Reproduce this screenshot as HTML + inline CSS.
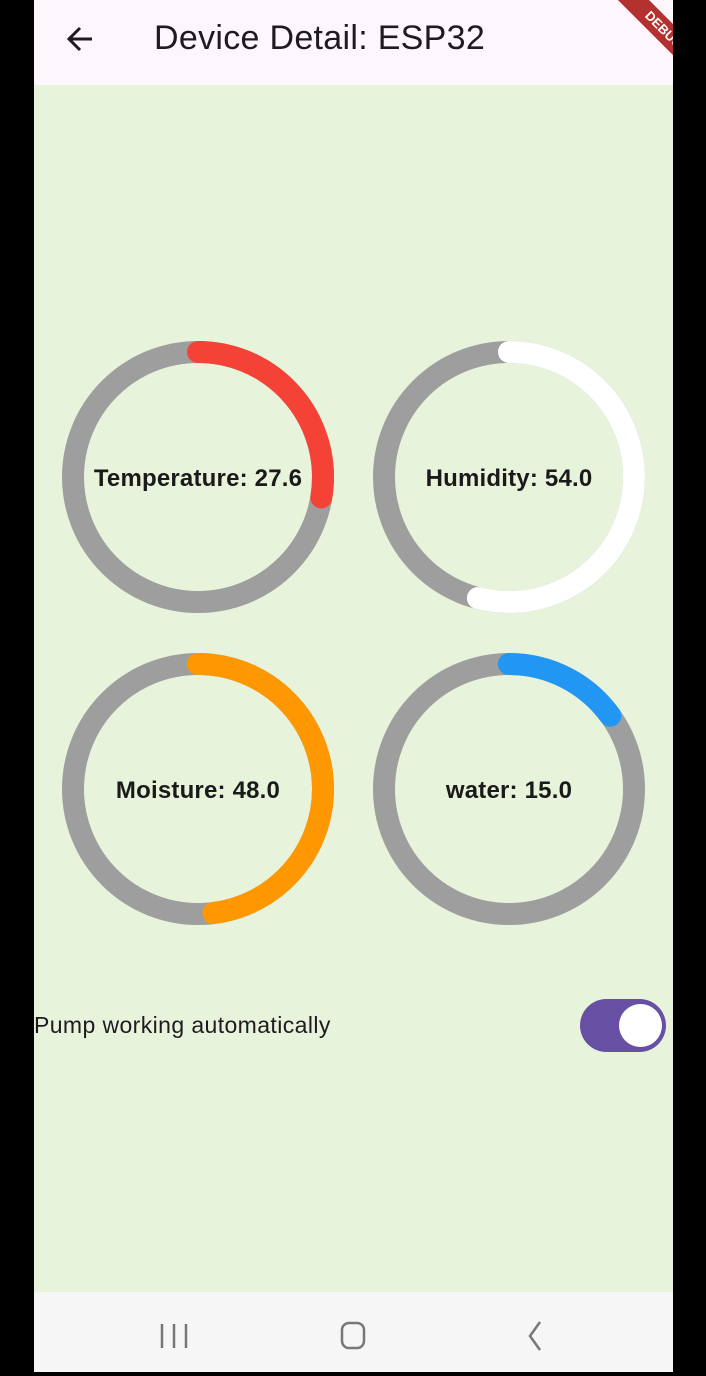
<!DOCTYPE html>
<html><head><meta charset="utf-8"><style>
body{margin:0;width:706px;height:1376px;background:#000;position:relative;overflow:hidden;font-family:"Liberation Sans",sans-serif}
.app{position:absolute;left:34px;top:0;width:639px;height:1372px;background:#e8f3dc;overflow:hidden}
.bar{position:absolute;left:0;top:0;width:639px;height:85px;background:#fdf6fd}
.title{position:absolute;left:120px;top:19px;font-size:34px;letter-spacing:0.3px;color:#1d1b20}
.nav{position:absolute;left:0;top:1292px;width:639px;height:80px;background:#f6f6f6}
.lbl{position:absolute;font-weight:bold;font-size:24px;letter-spacing:0.2px;color:#1a1a1a;text-align:center;width:300px}
</style></head><body>
<div class="app">
<div class="bar">
<svg style="position:absolute;left:30px;top:24px" width="32" height="30" viewBox="0 0 32 30"><path d="M28 15H6M16 4L5 15l11 11" fill="none" stroke="#1d1b20" stroke-width="3"/></svg>
<div class="title">Device Detail: ESP32</div>
</div>
<svg style="position:absolute;left:0;top:0" width="639" height="1000">
<g fill="none" stroke-width="22" stroke-linecap="round">
<circle cx="164" cy="477" r="125" stroke="#9e9e9e"/>
<circle cx="164" cy="477" r="125" stroke="#f44336" stroke-dasharray="216.8 1000" transform="rotate(-90 164 477)"/>
<circle cx="475" cy="477" r="125" stroke="#9e9e9e"/>
<circle cx="475" cy="477" r="125" stroke="#ffffff" stroke-dasharray="424 1000" transform="rotate(-90 475 477)"/>
<circle cx="164" cy="789" r="125" stroke="#9e9e9e"/>
<circle cx="164" cy="789" r="125" stroke="#ff9800" stroke-dasharray="377 1000" transform="rotate(-90 164 789)"/>
<circle cx="475" cy="789" r="125" stroke="#9e9e9e"/>
<circle cx="475" cy="789" r="125" stroke="#2196f3" stroke-dasharray="118 1000" transform="rotate(-90 475 789)"/>
</g></svg>
<div class="lbl" style="left:14px;top:465px">Temperature: 27.6</div>
<div class="lbl" style="left:325px;top:465px">Humidity: 54.0</div>
<div class="lbl" style="left:14px;top:777px">Moisture: 48.0</div>
<div class="lbl" style="left:325px;top:777px">water: 15.0</div>
<div style="position:absolute;left:0;top:1012px;font-size:23px;letter-spacing:0.4px;color:#1d1b20">Pump working automatically</div>
<div style="position:absolute;left:546px;top:999px;width:86px;height:53px;border-radius:27px;background:#6750a4"></div>
<div style="position:absolute;left:585px;top:1004px;width:43px;height:43px;border-radius:50%;background:#fff"></div>
<div class="nav">
<svg style="position:absolute;left:0;top:0" width="639" height="80">
<g stroke="#777" stroke-width="2.5" fill="none">
<path d="M128 32v24M140 32v24M152 32v24"/>
<rect x="308" y="31" width="22" height="25" rx="7"/>
<path d="M506 30l-10 14 10 14"/>
</g></svg>
</div>
<div style="position:absolute;left:595px;top:-20px;width:120px;height:22px;background:#b3312f;transform:rotate(45deg);transform-origin:0 0;color:#fff;font-size:13px;font-weight:bold;text-align:center;line-height:22px">DEBUG</div>
</div>
</body></html>
